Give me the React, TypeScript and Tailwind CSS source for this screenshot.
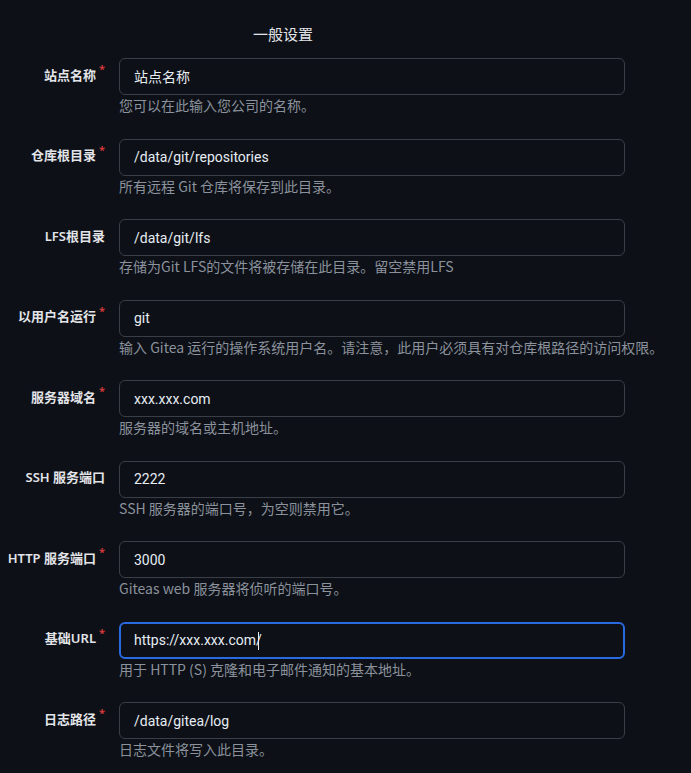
const fields = [
  { label: '站点名称', value: '站点名称', help: '您可以在此输入您公司的名称。', required: true },
  { label: '仓库根目录', value: '/data/git/repositories', help: '所有远程 Git 仓库将保存到此目录。', required: true },
  { label: 'LFS根目录', value: '/data/git/lfs', help: '存储为Git LFS的文件将被存储在此目录。留空禁用LFS', required: false },
  { label: '以用户名运行', value: 'git', help: '输入 Gitea 运行的操作系统用户名。请注意，此用户必须具有对仓库根路径的访问权限。', required: true },
  { label: '服务器域名', value: 'xxx.xxx.com', help: '服务器的域名或主机地址。', required: true },
  { label: 'SSH 服务端口', value: '2222', help: 'SSH 服务器的端口号，为空则禁用它。', required: false },
  { label: 'HTTP 服务端口', value: '3000', help: 'Giteas web 服务器将侦听的端口号。', required: true },
  { label: '基础URL', value: 'https://xxx.xxx.com/', help: '用于 HTTP (S) 克隆和电子邮件通知的基本地址。', required: true, focused: true },
  { label: '日志路径', value: '/data/gitea/log', help: '日志文件将写入此目录。', required: true },
];

export default function App() {
  return (
    <div
      className="min-h-[773px] w-[691px] bg-[#0d1017] pt-[24px] text-[#e6edf3]"
      style={{ fontFamily: '"Noto Sans", "Noto Sans CJK SC", sans-serif' }}
    >
      <h2 className="ml-[253px] h-[20px] text-[15px] leading-[20px] text-[#e2e4e8]">一般设置</h2>
      <div className="mt-[14px] flex flex-col">
        {fields.map((f) => (
          <div key={f.label} className="mb-[24.5px] flex h-[56px] items-start gap-[14px]">
            <label className="flex h-[37px] w-[105px] shrink-0 items-center justify-end text-[13px] font-semibold text-[#e2e4e8]">
              <span className="-mt-[2px]">{f.label}</span>
              {f.required ? (
                <span className="-mt-[14px] ml-[3px] text-[11px] text-[#db3b3b]">*</span>
              ) : null}
            </label>
            <div className="w-[506px]">
              <div
                className={
                  f.focused
                    ? 'flex h-[37px] items-center rounded-[6px] border-2 border-[#2a6ae0] bg-[#0d1017] pl-[13px] pt-[1px] text-[14px]'
                    : 'flex h-[37px] items-center rounded-[6px] border border-[#3a3f47] bg-[#0d1017] pl-[14px] pt-[1px] text-[14px]'
                }
                style={{ fontFamily: 'Roboto, "Noto Sans CJK SC", sans-serif' }}
              >
                <span>{f.value}</span>
                {f.focused ? <span className="-ml-[4px] h-[18px] w-px bg-[#e6edf3]" /> : null}
              </div>
              <p
                className="mt-[1px] h-[18px] whitespace-nowrap text-[14px] leading-[18px] text-[#8b929c]"
                style={{ fontFamily: '"Noto Sans CJK SC", sans-serif' }}
              >
                {f.help}
              </p>
            </div>
          </div>
        ))}
      </div>
    </div>
  );
}
